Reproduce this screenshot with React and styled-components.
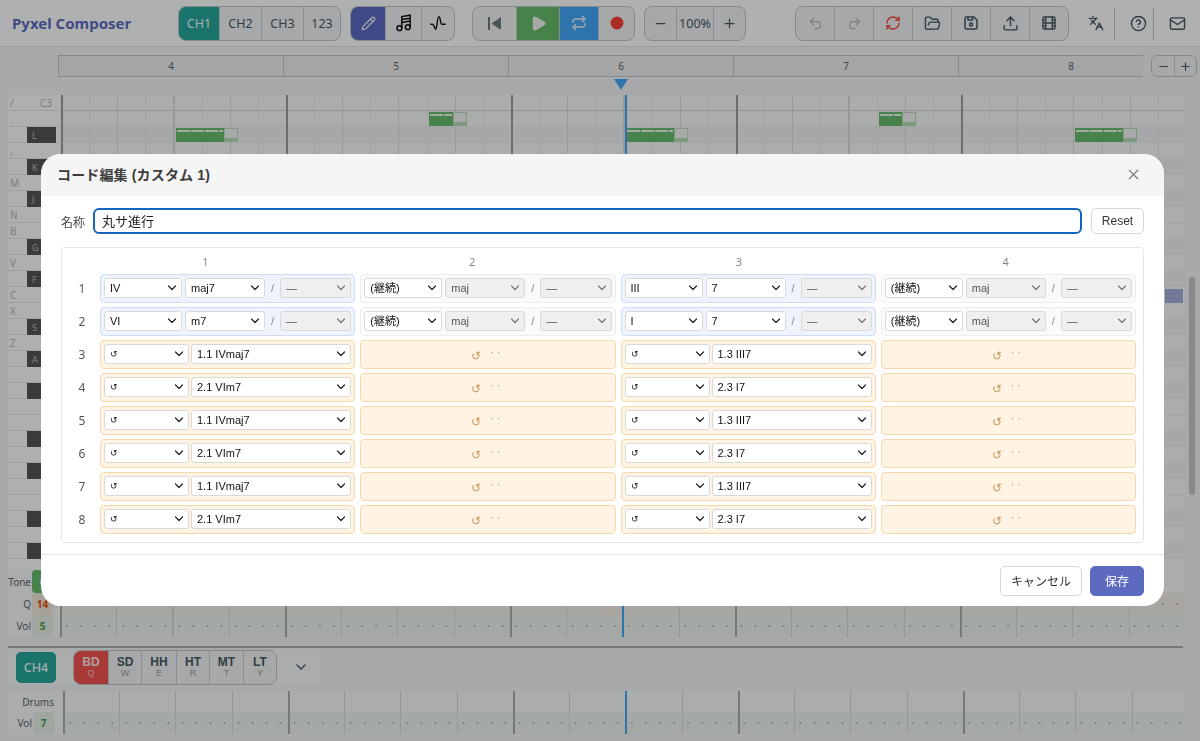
import React from "react";
import styled, { createGlobalStyle } from "styled-components";
import {
  Pencil, Play, Repeat, Undo2, Redo2, RefreshCw, FolderOpen, Upload, Film,
  Languages, CircleHelp, Mail, Minus, Plus, X, ChevronDown,
} from "lucide-react";
import { TbDeviceFloppy } from "react-icons/tb";

const CJK = `"Liberation Sans", "Noto Sans CJK JP", sans-serif`;
const UI = `"Noto Sans", "Noto Sans CJK JP", sans-serif`;

const chevron = (color) =>
  `url("data:image/svg+xml,%3Csvg xmlns='http://www.w3.org/2000/svg' width='12' height='12' viewBox='0 0 24 24' fill='none' stroke='${color}' stroke-width='2.4' stroke-linecap='round' stroke-linejoin='round'%3E%3Cpath d='m5 8 7 7 7-7'/%3E%3C/svg%3E")`;

const GlobalStyle = createGlobalStyle`
  html, body { margin: 0; padding: 0; }
  body { font-family: ${UI}; overflow: hidden; }
`;

const Page = styled.div`
  position: relative;
  width: 1200px;
  height: 741px;
  overflow: hidden;
  background: #f0f2f4;
  color: #37474f;
`;

const Header = styled.header`
  display: flex;
  align-items: center;
  box-sizing: border-box;
  height: 47px;
  padding-left: 12px;
  background: #fbfcfc;
  border-bottom: 1px solid #e0e2e4;
`;

const Title = styled.div`
  flex: 0 0 166px;
  font-size: 15px;
  font-weight: 700;
  color: #5c6bc0;
`;

const Group = styled.div`
  display: flex;
  flex: none;
  height: 33px;
  margin-left: ${(p) => p.$ml || 0}px;
  border: 1px solid #c0c5c8;
  border-radius: 8px;
  overflow: hidden;
  background: #eef1f3;
`;

const Btn = styled.div`
  display: flex;
  box-sizing: border-box;
  align-items: center;
  justify-content: center;
  width: ${(p) => p.$w}px;
  background: ${(p) => p.$bg || "transparent"};
  color: ${(p) => p.$fg || "#455a64"};
  font-size: 12.5px;
  & + & { border-left: 1px solid #c6cbce; }
`;

const PlainBtn = styled.div`
  display: flex;
  flex: none;
  box-sizing: border-box;
  align-items: center;
  justify-content: center;
  width: ${(p) => p.$w}px;
  height: 33px;
  margin-left: ${(p) => p.$ml || 0}px;
  padding-left: ${(p) => p.$pl || 0}px;
  border-right: ${(p) => (p.$line ? "1px solid #c0c5c8" : "none")};
  color: #455a64;
`;

const RulerRow = styled.div`
  display: flex;
  margin-top: 8px;
  padding-left: 58px;
`;

const Ruler = styled.div`
  display: flex;
  box-sizing: border-box;
  width: 1085px;
  height: 22px;
  overflow: hidden;
  border-top: 1px solid #c0c5c8;
  border-bottom: 1px solid #c0c5c8;
  border-left: 1px solid #c0c5c8;
  background: #ebedef;
`;

const Bar = styled.div`
  flex: 0 0 225px;
  box-sizing: border-box;
  border-right: 1px solid #c0c5c8;
  font-size: 10px;
  line-height: 20px;
  text-align: center;
  color: #5a666b;
`;

const SmallZoom = styled(Group)`
  height: 22px;
  box-sizing: border-box;
  border-radius: 6px;
  margin-left: 8px;
`;

const Marker = styled.div`
  position: absolute;
  left: 614px;
  top: 79px;
  width: 0;
  height: 0;
  border-left: 7px solid transparent;
  border-right: 7px solid transparent;
  border-top: 11px solid #42a5f5;
`;

const Roll = styled.div`
  display: flex;
  height: 475px;
  margin: 18px 0 0 8px;
  overflow: hidden;
`;

const Keys = styled.div`
  flex: 0 0 52px;
`;

const Key = styled.div`
  position: relative;
  box-sizing: border-box;
  height: 16px;
  background: #fafbfb;
  border-bottom: 1px solid #e2e4e6;
  font-size: 10px;
  line-height: 16px;
  color: #b2b5b7;
  padding-left: 2px;
`;

const KeyNote = styled.span`
  position: absolute;
  right: 8px;
  top: 0;
  font-size: 10px;
`;

const BlackKey = styled.div`
  position: absolute;
  left: 19px;
  top: 0;
  width: 29px;
  height: 16px;
  padding-left: 5px;
  box-sizing: border-box;
  background: #555555;
  color: #bdbdbd;
  font-size: 9px;
  line-height: 18px;
`;

const Canvas = styled.div`
  position: relative;
  flex: 0 0 1124px;
  margin-left: 1px;
  &::after {
    content: "";
    position: absolute;
    inset: 0;
    background:
      repeating-linear-gradient(90deg, #9a9d9f 0 2px, transparent 2px 225px),
      repeating-linear-gradient(90deg, #d8dbdd 0 1px, transparent 1px 56.25px),
      repeating-linear-gradient(90deg, #e8eaec 0 1px, transparent 1px 28.125px);
  }
`;

const Lane = styled.div`
  height: 16px;
  box-sizing: border-box;
  background: ${(p) => (p.$black ? "#edeff1" : "#f5f6f7")};
  border-bottom: 1px solid ${(p) => (p.$strong ? "#d2d5d7" : "#ebedee")};
`;

const Note = styled.div`
  position: absolute;
  z-index: 1;
  left: ${(p) => p.$x}px;
  top: ${(p) => p.$y}px;
  width: ${(p) => p.$w}px;
  height: 14px;
  background: #66bb6a;
  &::before {
    content: "";
    position: absolute;
    left: 1px;
    right: 1px;
    top: 2px;
    height: 2px;
    background: repeating-linear-gradient(90deg, #eef3ee 0 13px, #66bb6a 13px 14px);
  }
  &::after {
    content: "";
    position: absolute;
    left: 100%;
    top: 0;
    width: 12px;
    height: 9px;
    background: #f1f3f2;
    border: 1px solid #b6dcb8;
    border-bottom: 4px solid #b6dcb8;
  }
`;

const ChordNote = styled.div`
  position: absolute;
  z-index: 1;
  left: 1104px;
  top: 194px;
  width: 18px;
  height: 14px;
  background: #a6acd8;
`;

const Playhead = styled.div`
  position: absolute;
  z-index: 2;
  left: ${(p) => p.$x}px;
  top: 0;
  bottom: 0;
  width: 2px;
  background: #42a5f5;
`;

const Scrollbar = styled.div`
  position: absolute;
  left: 1189px;
  top: 277px;
  width: 6px;
  height: 218px;
  border-radius: 3px;
  background: #c2c4c6;
`;

const Rows = styled.div`
  position: relative;
  margin-left: 8px;
  width: 1177px;
`;

const Row = styled.div`
  display: flex;
  height: ${(p) => p.$h}px;
`;

const RowHead = styled.div`
  display: flex;
  flex: 0 0 ${(p) => p.$w}px;
  justify-content: flex-end;
  align-items: center;
  gap: 1px;
  padding-right: ${(p) => p.$pad || 0}px;
  box-sizing: border-box;
  background: #f5f6f7;
  font-size: 10px;
  color: #5a666b;
`;

const Value = styled.div`
  display: flex;
  flex: 0 0 21px;
  align-items: center;
  justify-content: center;
  height: 100%;
  box-sizing: border-box;
  border-radius: 4px;
  font-size: 10px;
  font-weight: 700;
  background: ${(p) => p.$bg};
  color: ${(p) => p.$fg};
`;

const Track = styled.div`
  position: relative;
  flex: 1;
  background-color: ${(p) => p.$bg || "#f5f6f7"};
  background-image:
    repeating-linear-gradient(90deg, #a9acae 0 2px, transparent 2px 225px),
    repeating-linear-gradient(90deg, #d6d9d9 0 1px, transparent 1px 56.25px)
    ${(p) => (p.$dots ? `, radial-gradient(circle, #a8aeac 0.8px, transparent 1.2px)` : "")};
  background-size: auto, auto ${(p) => (p.$dots ? ", 14.06px 100%" : "")};
`;

const Separator = styled.div`
  width: 1175px;
  height: 2px;
  margin: 9px 0 0 8px;
  background: #a9adaf;
`;

const DrumBar = styled.div`
  display: flex;
  align-items: center;
  width: 304px;
  height: 34px;
  margin: 2px 0 0 8px;
  padding-left: 8px;
  background: #f5f6f7;
`;

const ChannelTag = styled.div`
  display: flex;
  flex: 0 0 40px;
  align-items: center;
  justify-content: center;
  height: 31px;
  border-radius: 5px;
  background: #26a69a;
  color: #eef7f6;
  font-size: 12.5px;
  font-weight: 500;
`;

const DrumBtn = styled.div`
  display: flex;
  box-sizing: border-box;
  flex-direction: column;
  align-items: center;
  justify-content: center;
  width: ${(p) => p.$w}px;
  background: ${(p) => (p.$on ? "#ef5350" : "transparent")};
  color: ${(p) => (p.$on ? "#fbe4e4" : "#455a64")};
  font-family: ${CJK};
  font-size: 12px;
  font-weight: 700;
  line-height: 12px;
  & + & { border-left: 1px solid #c6cbce; }
  small {
    font-size: 9px;
    font-weight: 400;
    line-height: 11px;
    color: ${(p) => (p.$on ? "#f9c4c4" : "#98a2a6")};
  }
`;

const DrumChevron = styled.div`
  display: flex;
  margin-left: 16px;
  color: #455a64;
`;

const DrumRows = styled.div`
  margin: 7px 0 0 8px;
  width: 1177px;
`;

const Overlay = styled.div`
  position: fixed;
  inset: 0;
  z-index: 10;
  box-sizing: border-box;
  padding: 154px 0 0 41px;
  background: rgba(0, 0, 0, 0.3);
`;

const Modal = styled.div`
  width: 1123px;
  height: 452px;
  display: flex;
  flex-direction: column;
  overflow: hidden;
  border-radius: 20px;
  background: #fff;
  font-family: ${CJK};
  color: #333;
`;

const ModalHead = styled.div`
  display: flex;
  flex: 0 0 42px;
  align-items: center;
  justify-content: space-between;
  padding: 0 22px 2px 16px;
  box-sizing: border-box;
  background: #f5f5f5;
  font-size: 14px;
  font-weight: 700;
  letter-spacing: 0.15px;
  color: #3c3c3c;
`;

const CloseBtn = styled.div`
  display: flex;
  color: #777;
`;

const ModalBody = styled.div`
  flex: 1;
  padding: 12px 20px 0;
`;

const NameRow = styled.div`
  display: flex;
  align-items: center;
  height: 26px;
`;

const NameLabel = styled.label`
  flex: 0 0 32px;
  font-size: 12px;
  color: #444;
`;

const NameInput = styled.input`
  flex: 1;
  box-sizing: border-box;
  height: 26px;
  padding: 0 7px 2px;
  border: 2px solid #1565c0;
  border-radius: 6px;
  outline: none;
  font-family: ${CJK};
  font-size: 13px;
  color: #222;
`;

const Button = styled.button`
  flex: none;
  box-sizing: border-box;
  width: ${(p) => p.$w}px;
  height: ${(p) => p.$h}px;
  margin-left: ${(p) => p.$ml || 0}px;
  padding: 0;
  border: 1px solid ${(p) => (p.$primary ? "#5c6bc0" : "#d8d8d8")};
  border-radius: 5px;
  background: ${(p) => (p.$primary ? "#5c6bc0" : "#fff")};
  color: ${(p) => (p.$primary ? "#fff" : "#333")};
  font-family: ${CJK};
  font-size: 12px;
`;

const ChordGrid = styled.div`
  display: grid;
  grid-template-columns: 26px repeat(4, 1fr);
  grid-template-rows: 16px;
  grid-auto-rows: 28.5px;
  column-gap: 5px;
  row-gap: 4.5px;
  box-sizing: border-box;
  height: 296px;
  margin-top: 13px;
  padding: 5.5px 7px;
  border: 1px solid #e6e6e6;
  border-radius: 4px;
`;

const ColHeads = styled.div`
  grid-column: 1 / -1;
  display: grid;
  grid-template-columns: repeat(4, 1fr);
  align-items: center;
  margin: 0 -3px 0 3px;
`;

const ColHead = styled.div`
  text-align: center;
  font-family: ${UI};
  font-size: 11px;
  color: #888;
`;

const RowNum = styled.div`
  align-self: center;
  text-align: center;
  font-family: ${UI};
  font-size: 12px;
  color: #555;
`;

const tones = {
  chord: "background:#eef3fd;border-color:#d0dcf5;",
  cont: "background:#fafafa;border-color:#eeeeee;",
  ref: "background:#fff3e3;border-color:#f5d8ac;",
};

const Cell = styled.div`
  display: flex;
  align-items: center;
  box-sizing: border-box;
  padding: 0 3px;
  border: 1px solid;
  border-radius: 4px;
  ${(p) => tones[p.$tone]}
`;

const RepeatCell = styled(Cell)`
  justify-content: center;
  gap: 8px;
  color: #c89a5a;
  font-size: 12px;
`;

const RepeatMark = styled.span`
  transform: translate(-1px, 1.5px);
`;

const Dots = styled.span`
  letter-spacing: 3px;
  font-size: 11px;
  transform: translateY(-2px);
`;

const Select = styled.select`
  flex: ${(p) => (p.$w ? `0 0 ${p.$w}px` : "1")};
  min-width: 0;
  box-sizing: border-box;
  height: 20px;
  margin-left: ${(p) => p.$ml || 0}px;
  padding: 0 14px 0 5px;
  appearance: none;
  border: 1px solid #d9d9d9;
  border-radius: 3px;
  background: ${(p) => (p.disabled ? "#efefef" : "#fff")} ${(p) => chevron(p.disabled ? "%23777" : "%23222")} no-repeat right 3px center;
  font-family: ${CJK};
  font-size: ${(p) => p.$size || 11}px;
  color: ${(p) => (p.disabled ? "#555" : "#111")};
  opacity: 1;
`;

const Slash = styled.span`
  flex: 0 0 15px;
  text-align: center;
  font-size: 11px;
  color: #888;
`;

const ModalFoot = styled.div`
  display: flex;
  flex: 0 0 51px;
  align-items: center;
  justify-content: flex-end;
  padding-right: 20px;
  border-top: 1px solid #e6e6e6;
`;

const MusicIcon = () => (
  <svg width="16" height="18" viewBox="0 0 16 18" fill="none" stroke="#111" strokeWidth="1.5">
    <circle cx="3.4" cy="14.2" r="2.4" />
    <circle cx="11.8" cy="13.2" r="2.4" />
    <path d="M5.8 14V2.6l8.4-1.4v12M5.8 5.6l8.4-1.4M5.8 8.4l8.4-1.4" />
  </svg>
);

const WaveIcon = () => (
  <svg width="16" height="16" viewBox="0 0 18 18" fill="none" stroke="#111" strokeWidth="1.6" strokeLinecap="round">
    <path d="M1 10.5h1.5C5 10.5 5 16 6.5 16S8 2 10 2s1.5 8.5 3.5 8.5H17" />
  </svg>
);

const PrevIcon = () => (
  <svg width="15" height="15" viewBox="0 0 15 15" fill="#6a7a82">
    <rect x="1" y="1" width="2" height="13" />
    <path d="M14 1v13L4.5 7.5z" />
  </svg>
);

const keyRows = [
  ["/", "", "C3"], [".", ""], ["", "L"], [",", ""], ["", "K"], ["M", ""], ["", "J"], ["N", ""], ["B", ""],
  ["", "G"], ["V", ""], ["", "F"], ["C", ""], ["X", ""], ["", "S"], ["Z", ""], ["", "A"], ["", ""], ["", " "],
  ["", ""], ["", ""], ["", " "], ["", ""], ["", " "], ["", ""], ["", ""], ["", " "], ["", ""], ["", " "], ["", ""],
];

const notes = [
  { x: 115, y: 33, w: 48 },
  { x: 368, y: 17, w: 24 },
  { x: 565, y: 33, w: 48 },
  { x: 818, y: 17, w: 23 },
  { x: 1014, y: 33, w: 48 },
];

const SLOTS = [0, 1, 2, 3];

const ChordCell = ({ root, type, tone, typeOff }) => (
  <Cell $tone={tone}>
    <Select $w={78} defaultValue={root}><option>{root}</option></Select>
    <Select $w={80} $ml={3} disabled={typeOff} defaultValue={type}><option>{type}</option></Select>
    <Slash>/</Slash>
    <Select disabled defaultValue="—"><option>—</option></Select>
  </Cell>
);

const RefCell = ({ value }) => (
  <Cell $tone="ref">
    <Select $w={85} $size={9} defaultValue="↺"><option>↺</option></Select>
    <Select $ml={2} defaultValue={value}><option>{value}</option></Select>
  </Cell>
);

const Pending = () => (
  <RepeatCell $tone="ref">
    <RepeatMark>↺</RepeatMark>
    <Dots>··</Dots>
  </RepeatCell>
);

const refRows = [
  ["1.1 IVmaj7", "1.3 III7"],
  ["2.1 VIm7", "2.3 I7"],
  ["1.1 IVmaj7", "1.3 III7"],
  ["2.1 VIm7", "2.3 I7"],
  ["1.1 IVmaj7", "1.3 III7"],
  ["2.1 VIm7", "2.3 I7"],
];

export default function App() {
  return (
    <Page>
      <GlobalStyle />
      <Header>
        <Title>Pyxel Composer</Title>
        <Group>
          <Btn $w={40} $bg="#26a69a" $fg="#eef7f6">CH1</Btn>
          <Btn $w={42}>CH2</Btn>
          <Btn $w={42}>CH3</Btn>
          <Btn $w={37}>123</Btn>
        </Group>
        <Group $ml={9}>
          <Btn $w={34} $bg="#5c6bc0" $fg="#eef0fa"><Pencil size={15} /></Btn>
          <Btn $w={36}><MusicIcon /></Btn>
          <Btn $w={33}><WaveIcon /></Btn>
        </Group>
        <Group $ml={17}>
          <Btn $w={43}><PrevIcon /></Btn>
          <Btn $w={43} $bg="#66bb6a" $fg="#eef3ee"><Play size={17} fill="#eef3ee" /></Btn>
          <Btn $w={39} $bg="#42a5f5" $fg="#eaf3fb"><Repeat size={16} /></Btn>
          <Btn $w={36}>
            <svg width="16" height="16" viewBox="0 0 16 16"><circle cx="8" cy="8" r="6.5" fill="#f44336" /></svg>
          </Btn>
        </Group>
        <Group $ml={9}>
          <Btn $w={31}><Minus size={15} /></Btn>
          <Btn $w={37}>100%</Btn>
          <Btn $w={32}><Plus size={15} /></Btn>
        </Group>
        <Group $ml={49}>
          <Btn $w={38} $fg="#b0b7ba"><Undo2 size={15} /></Btn>
          <Btn $w={39} $fg="#b0b7ba"><Redo2 size={15} /></Btn>
          <Btn $w={39} $fg="#f44336"><RefreshCw size={16} /></Btn>
          <Btn $w={39}><FolderOpen size={17} /></Btn>
          <Btn $w={39}><TbDeviceFloppy size={18} /></Btn>
          <Btn $w={39}><Upload size={17} /></Btn>
          <Btn $w={39}><Film size={16} /></Btn>
        </Group>
        <PlainBtn $w={38} $ml={8} $line><Languages size={16} /></PlainBtn>
        <PlainBtn $w={39} $pl={9} $line><CircleHelp size={17} /></PlainBtn>
        <PlainBtn $w={46}><Mail size={17} /></PlainBtn>
      </Header>

      <RulerRow>
        <Ruler>
          {[4, 5, 6, 7, 8].map((n) => <Bar key={n}>{n}</Bar>)}
        </Ruler>
        <SmallZoom>
          <Btn $w={22}><Minus size={13} /></Btn>
          <Btn $w={22}><Plus size={13} /></Btn>
        </SmallZoom>
      </RulerRow>
      <Marker />

      <Roll>
        <Keys>
          {keyRows.map(([label, black, note], i) => (
            <Key key={i}>
              {label}
              {note && <KeyNote>{note}</KeyNote>}
              {black && <BlackKey>{black.trim()}</BlackKey>}
            </Key>
          ))}
        </Keys>
        <Canvas>
          {keyRows.map(([, black], i) => <Lane key={i} $black={Boolean(black)} $strong={i === 0} />)}
          {notes.map((n) => <Note key={n.x} $x={n.x} $y={n.y} $w={n.w} />)}
          <ChordNote />
          <Playhead $x={564} />
        </Canvas>
      </Roll>

      <Rows>
        <Row $h={23}>
          <RowHead $w={52} $pad={7}>Tone<Value $bg="#66bb6a" $fg="#fff">0</Value></RowHead>
          <Track />
        </Row>
        <Row $h={22}>
          <RowHead $w={52} $pad={7}>Q<Value $bg="#f3e6d8" $fg="#e65100">14</Value></RowHead>
          <Track $bg="#f3ede5" $dots />
        </Row>
        <Row $h={22}>
          <RowHead $w={52} $pad={7}>Vol<Value $bg="#e4efe5" $fg="#43a047">5</Value></RowHead>
          <Track $bg="#edf2ee" $dots />
          <Playhead $x={614} />
        </Row>
      </Rows>
      <Separator />
      <DrumBar>
        <ChannelTag>CH4</ChannelTag>
        <Group $ml={17}>
          <DrumBtn $w={34} $on>BD<small>Q</small></DrumBtn>
          <DrumBtn $w={33}>SD<small>W</small></DrumBtn>
          <DrumBtn $w={35}>HH<small>E</small></DrumBtn>
          <DrumBtn $w={33}>HT<small>R</small></DrumBtn>
          <DrumBtn $w={34}>MT<small>T</small></DrumBtn>
          <DrumBtn $w={33}>LT<small>Y</small></DrumBtn>
        </Group>
        <DrumChevron><ChevronDown size={16} /></DrumChevron>
      </DrumBar>
      <DrumRows>
        <Row $h={21}>
          <RowHead $w={55} $pad={9}>Drums</RowHead>
          <Track>
            <Playhead $x={562} />
          </Track>
        </Row>
        <Row $h={22}>
          <RowHead $w={55} $pad={9}>Vol<Value $bg="#e4efe5" $fg="#43a047">7</Value></RowHead>
          <Track $bg="#edf2ee" $dots>
            <Playhead $x={562} />
          </Track>
        </Row>
      </DrumRows>
      <Scrollbar />

      <Overlay>
        <Modal>
          <ModalHead>
            <span>コード編集 (カスタム 1)</span>
            <CloseBtn><X size={17} strokeWidth={1.5} /></CloseBtn>
          </ModalHead>
          <ModalBody>
            <NameRow>
              <NameLabel>名称</NameLabel>
              <NameInput defaultValue="丸サ進行" />
              <Button $w={53} $h={26} $ml={9}>Reset</Button>
            </NameRow>
            <ChordGrid>
              <ColHeads>
                {[1, 2, 3, 4].map((n) => <ColHead key={n}>{n}</ColHead>)}
              </ColHeads>
              <RowNum>1</RowNum>
              <ChordCell tone="chord" root="IV" type="maj7" />
              <ChordCell tone="cont" root="(継続)" type="maj" typeOff />
              <ChordCell tone="chord" root="III" type="7" />
              <ChordCell tone="cont" root="(継続)" type="maj" typeOff />
              <RowNum>2</RowNum>
              <ChordCell tone="chord" root="VI" type="m7" />
              <ChordCell tone="cont" root="(継続)" type="maj" typeOff />
              <ChordCell tone="chord" root="I" type="7" />
              <ChordCell tone="cont" root="(継続)" type="maj" typeOff />
              {refRows.map(([a, b], i) => (
                <React.Fragment key={i}>
                  <RowNum>{i + 3}</RowNum>
                  {SLOTS.map((s) =>
                    s % 2 === 0 ? <RefCell key={s} value={s === 0 ? a : b} /> : <Pending key={s} />
                  )}
                </React.Fragment>
              ))}
            </ChordGrid>
          </ModalBody>
          <ModalFoot>
            <Button $w={82} $h={30}>キャンセル</Button>
            <Button $w={54} $h={30} $ml={8} $primary>保存</Button>
          </ModalFoot>
        </Modal>
      </Overlay>
    </Page>
  );
}
